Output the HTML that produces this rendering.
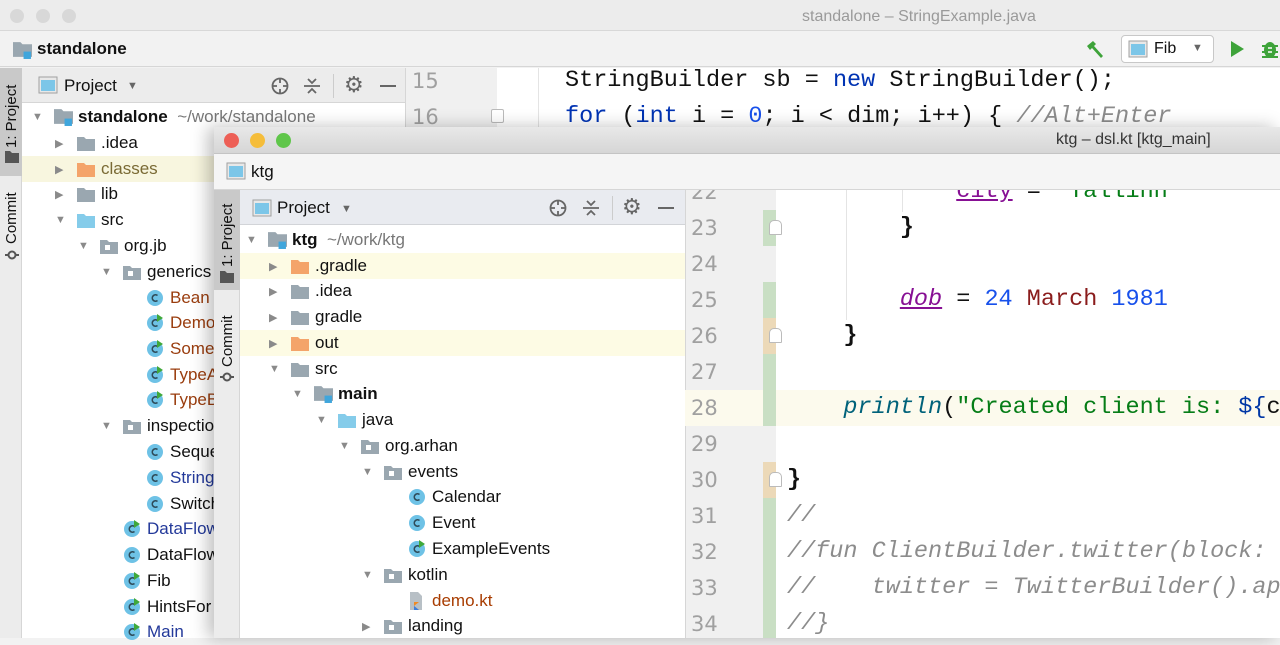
<!DOCTYPE html>
<html><head><meta charset="utf-8"><style>
*{margin:0;padding:0;box-sizing:border-box}
body{width:1280px;height:638px;overflow:hidden;position:relative;background:#f2f2f2;font-family:"Liberation Sans",Helvetica,Arial,sans-serif;color:#111}
.a{position:absolute}
.r{position:absolute;height:26px;display:flex;align-items:center;font-size:17px;white-space:nowrap}
.ar{width:22px;font-size:11px;color:#8a8a8a;display:inline-block}
.ic{width:24px;display:inline-flex;align-items:center}
.code{font-family:"Liberation Mono","DejaVu Sans Mono",monospace;font-size:23.5px;white-space:pre;position:absolute;line-height:36px}
.ln{font-family:"DejaVu Sans",sans-serif;font-size:21px;color:#a0a0a0;position:absolute;line-height:36px}
.vt{position:absolute;transform:rotate(-90deg);transform-origin:left top;font-size:15px;white-space:nowrap}
</style></head><body>
<svg width="0" height="0" style="position:absolute"><defs>
<symbol id="fg" viewBox="0 0 18 15"><path d="M0 1h7l2 2h9v12H0z" fill="#9aa7b0"/></symbol>
<symbol id="fo" viewBox="0 0 18 15"><path d="M0 1h7l2 2h9v12H0z" fill="#f4a46a"/></symbol>
<symbol id="fb" viewBox="0 0 18 15"><path d="M0 1h7l2 2h9v12H0z" fill="#85ccea"/></symbol>
<symbol id="fp" viewBox="0 0 18 15"><path d="M0 1h7l2 2h9v12H0z" fill="#9aa7b0"/><rect x="5" y="6" width="5" height="5" fill="#fff"/></symbol>
<symbol id="fm" viewBox="0 0 18 17"><path d="M0 1h7l2 2h9v12H0z" fill="#9aa7b0"/><rect x="10" y="10" width="7" height="7" fill="#40a6dc"/></symbol>
<symbol id="cc" viewBox="0 0 18 18"><circle cx="9" cy="9" r="8" fill="#6ec2e6"/><path d="M11.5 6.5a3.2 3.2 0 1 0 0 5" fill="none" stroke="#2e4a58" stroke-width="1.6"/></symbol>
<symbol id="cr" viewBox="0 0 18 18"><circle cx="9" cy="9" r="8" fill="#6ec2e6"/><path d="M11.5 6.5a3.2 3.2 0 1 0 0 5" fill="none" stroke="#2e4a58" stroke-width="1.6"/><path d="M11 0l6 4-6 4z" fill="#3fa83a"/></symbol>
<symbol id="pw" viewBox="0 0 20 18"><rect x="1" y="1" width="18" height="16" fill="#e8e8e8" stroke="#a0a0a0"/><rect x="3" y="4" width="14" height="11" fill="#7cc6e8"/></symbol>
</defs></svg>

<!-- BACK WINDOW -->
<div class="a" style="left:0;top:0;width:1280px;height:31px;background:#ececec;border-bottom:1px solid #d8d8d8"></div>
<div class="a" style="left:10px;top:9px;width:14px;height:14px;border-radius:50%;background:#d8d8d8"></div>
<div class="a" style="left:36px;top:9px;width:14px;height:14px;border-radius:50%;background:#d8d8d8"></div>
<div class="a" style="left:62px;top:9px;width:14px;height:14px;border-radius:50%;background:#d8d8d8"></div>
<div class="a" style="left:802px;top:8px;font-size:16px;color:#9a9a9a">standalone – StringExample.java</div>
<div class="a" style="left:0;top:31px;width:1280px;height:36px;background:#f2f2f2;border-bottom:1px solid #d6d6d6"></div>
<svg class="a" style="left:13px;top:41px" width="19" height="18"><use href="#fm"/></svg>
<div class="a" style="left:37px;top:39px;font-size:17px;font-weight:bold">standalone</div>
<svg class="a" style="left:1084px;top:38px" width="22" height="22"><path d="M3 8l6-5 3 3-2 2 9 10-2 2-9-10-2 2z" fill="#3ea33a"/></svg>
<div class="a" style="left:1121px;top:35px;width:93px;height:28px;background:#fff;border:1px solid #c8c8c8;border-radius:4px"></div>
<svg class="a" style="left:1128px;top:40px" width="20" height="18"><use href="#pw"/></svg>
<div class="a" style="left:1154px;top:40px;font-size:16px">Fib</div>
<div class="a" style="left:1192px;top:42px;font-size:11px;color:#666">▼</div>
<svg class="a" style="left:1229px;top:39px" width="16" height="20"><path d="M2 2l13 8-13 8z" fill="#3ea33a"/></svg>
<svg class="a" style="left:1260px;top:38px" width="20" height="22"><ellipse cx="10" cy="12" rx="6" ry="8" fill="#3ea33a"/><path d="M2 8h16M2 14h16M2 19h16" stroke="#3ea33a" stroke-width="2"/><path d="M8 10h4M8 14h4" stroke="#fff" stroke-width="1.5"/></svg>

<div class="a" style="left:0;top:68px;width:22px;height:570px;background:#ececec;border-right:1px solid #d6d6d6"></div>
<div class="a" style="left:0;top:68px;width:22px;height:108px;background:#c9c9c9"></div>
<div class="vt" style="left:3px;top:148px">1: Project</div>
<svg class="a" style="left:5px;top:150px" width="14" height="13"><path d="M0 1h5l2 2h7v10H0z" fill="#555"/></svg>
<div class="vt" style="left:3px;top:244px">Commit</div>
<svg class="a" style="left:5px;top:248px" width="14" height="14"><circle cx="7" cy="7" r="3.5" fill="none" stroke="#555" stroke-width="2"/><path d="M0 7h3M11 7h3" stroke="#555" stroke-width="2"/></svg>

<div class="a" style="left:22px;top:68px;width:383px;height:35px;background:#ececec;border-bottom:1px solid #d6d6d6"></div>
<svg class="a" style="left:38px;top:76px" width="20" height="18"><use href="#pw"/></svg>
<div class="a" style="left:64px;top:76px;font-size:17px">Project</div>
<div class="a" style="left:127px;top:80px;font-size:11px;color:#666">▼</div>
<svg class="a" style="left:270px;top:76px" width="20" height="20"><circle cx="10" cy="10" r="7.5" fill="none" stroke="#666" stroke-width="1.8"/><path d="M10 2v5M10 13v5M2 10h5M13 10h5" stroke="#666" stroke-width="1.8"/></svg>
<svg class="a" style="left:303px;top:76px" width="18" height="20"><path d="M1 10h16M5 3l4 4 4-4M5 17l4-4 4 4" stroke="#666" stroke-width="1.8" fill="none"/></svg>
<div class="a" style="left:333px;top:74px;width:1px;height:24px;background:#ccc"></div>
<div class="a" style="left:344px;top:72px;font-size:22px;color:#666">⚙</div>
<div class="a" style="left:380px;top:85px;width:16px;height:2px;background:#666"></div>

<div class="a" style="left:22px;top:103px;width:383px;height:535px;background:#fff"></div>
<div class="a" style="left:22px;top:156px;width:383px;height:26px;background:#f8f6df"></div>

<div class="r" style="left:32px;top:104px"><span class="ar">▼</span><span class="ic"><svg width="19" height="18"><use href="#fm"/></svg></span><b>standalone</b>&nbsp;&nbsp;<span style="color:#777">~/work/standalone</span></div>
<div class="r" style="left:55px;top:130px"><span class="ar">▶</span><span class="ic"><svg width="18" height="15"><use href="#fg"/></svg></span>.idea</div>
<div class="r" style="left:55px;top:156px"><span class="ar">▶</span><span class="ic"><svg width="18" height="15"><use href="#fo"/></svg></span><span style="color:#7a6a34">classes</span></div>
<div class="r" style="left:55px;top:181px"><span class="ar">▶</span><span class="ic"><svg width="18" height="15"><use href="#fg"/></svg></span>lib</div>
<div class="r" style="left:55px;top:207px"><span class="ar">▼</span><span class="ic"><svg width="18" height="15"><use href="#fb"/></svg></span>src</div>
<div class="r" style="left:78px;top:233px"><span class="ar">▼</span><span class="ic"><svg width="18" height="15"><use href="#fp"/></svg></span>org.jb</div>
<div class="r" style="left:101px;top:259px"><span class="ar">▼</span><span class="ic"><svg width="18" height="15"><use href="#fp"/></svg></span>generics</div>
<div class="r" style="left:124px;top:285px"><span class="ar"></span><span class="ic"><svg width="18" height="18"><use href="#cc"/></svg></span><span style="color:#9a3d0e">Bean</span></div>
<div class="r" style="left:124px;top:310px"><span class="ar"></span><span class="ic"><svg width="18" height="18"><use href="#cr"/></svg></span><span style="color:#9a3d0e">Demo</span></div>
<div class="r" style="left:124px;top:336px"><span class="ar"></span><span class="ic"><svg width="18" height="18"><use href="#cr"/></svg></span><span style="color:#9a3d0e">Some</span></div>
<div class="r" style="left:124px;top:362px"><span class="ar"></span><span class="ic"><svg width="18" height="18"><use href="#cr"/></svg></span><span style="color:#9a3d0e">TypeA</span></div>
<div class="r" style="left:124px;top:387px"><span class="ar"></span><span class="ic"><svg width="18" height="18"><use href="#cr"/></svg></span><span style="color:#9a3d0e">TypeB</span></div>
<div class="r" style="left:101px;top:413px"><span class="ar">▼</span><span class="ic"><svg width="18" height="15"><use href="#fp"/></svg></span>inspection</div>
<div class="r" style="left:124px;top:439px"><span class="ar"></span><span class="ic"><svg width="18" height="18"><use href="#cc"/></svg></span>Sequence</div>
<div class="r" style="left:124px;top:465px"><span class="ar"></span><span class="ic"><svg width="18" height="18"><use href="#cc"/></svg></span><span style="color:#23399a">String</span></div>
<div class="r" style="left:124px;top:491px"><span class="ar"></span><span class="ic"><svg width="18" height="18"><use href="#cc"/></svg></span>Switch</div>
<div class="r" style="left:101px;top:516px"><span class="ar"></span><span class="ic"><svg width="18" height="18"><use href="#cr"/></svg></span><span style="color:#23399a">DataFlow</span></div>
<div class="r" style="left:101px;top:542px"><span class="ar"></span><span class="ic"><svg width="18" height="18"><use href="#cc"/></svg></span>DataFlow</div>
<div class="r" style="left:101px;top:568px"><span class="ar"></span><span class="ic"><svg width="18" height="18"><use href="#cr"/></svg></span>Fib</div>
<div class="r" style="left:101px;top:594px"><span class="ar"></span><span class="ic"><svg width="18" height="18"><use href="#cr"/></svg></span>HintsFor</div>
<div class="r" style="left:101px;top:619px"><span class="ar"></span><span class="ic"><svg width="18" height="18"><use href="#cr"/></svg></span><span style="color:#23399a">Main</span></div>

<div class="a" style="left:405px;top:68px;width:92px;height:570px;background:#f0f0f0;border-left:1px solid #d6d6d6"></div>
<div class="a" style="left:497px;top:68px;width:783px;height:570px;background:#fff"></div>
<div class="a" style="left:538px;top:68px;width:1px;height:60px;background:#e4e4e4"></div>
<div class="ln" style="left:412px;top:63px">15</div>
<div class="ln" style="left:412px;top:99px">16</div>
<div class="a" style="left:491px;top:109px;width:13px;height:14px;border:1px solid #bbb;background:#fff;border-radius:2px"></div>
<div class="code" style="left:565px;top:63px">StringBuilder sb = <span style="color:#0033b3">new</span> StringBuilder();</div>
<div class="code" style="left:565px;top:99px"><span style="color:#0033b3">for</span> (<span style="color:#0033b3">int</span> i = <span style="color:#1750eb">0</span>; i &lt; dim; i++) { <i style="color:#8c8c8c">//Alt+Enter</i></div>

<!-- FRONT WINDOW -->
<div class="a" style="left:214px;top:127px;width:1066px;height:511px;background:#fff;box-shadow:-6px 0 16px rgba(0,0,0,.25);overflow:hidden">
  <div class="a" style="left:0;top:0;width:1066px;height:27px;background:linear-gradient(#e8e8e8,#d6d6d6);border-bottom:1px solid #c4c4c4"></div>
  <div class="a" style="left:10px;top:6px;width:15px;height:15px;border-radius:50%;background:#ed5f56"></div>
  <div class="a" style="left:36px;top:6px;width:15px;height:15px;border-radius:50%;background:#f5bd3a"></div>
  <div class="a" style="left:62px;top:6px;width:15px;height:15px;border-radius:50%;background:#5fc64a"></div>
  <div class="a" style="left:842px;top:4px;font-size:16px;color:#333">ktg – dsl.kt [ktg_main]</div>
  <div class="a" style="left:0;top:27px;width:1066px;height:36px;background:#f5f5f5;border-bottom:1px solid #d6d6d6"></div>
  <svg class="a" style="left:12px;top:35px" width="20" height="18"><use href="#pw"/></svg>
  <div class="a" style="left:37px;top:35px;font-size:17px">ktg</div>

  <div class="a" style="left:0;top:63px;width:26px;height:448px;background:#ececec;border-right:1px solid #d6d6d6"></div>
  <div class="a" style="left:0;top:63px;width:26px;height:100px;background:#c9c9c9"></div>
  <div class="vt" style="left:5px;top:140px">1: Project</div>
  <svg class="a" style="left:6px;top:143px" width="14" height="13"><path d="M0 1h5l2 2h7v10H0z" fill="#555"/></svg>
  <div class="vt" style="left:5px;top:240px">Commit</div>
  <svg class="a" style="left:6px;top:243px" width="14" height="14"><circle cx="7" cy="7" r="3.5" fill="none" stroke="#555" stroke-width="2"/><path d="M0 7h3M11 7h3" stroke="#555" stroke-width="2"/></svg>

  <div class="a" style="left:26px;top:63px;width:445px;height:35px;background:#e9ebf0;border-bottom:1px solid #d2d4d8"></div>
  <svg class="a" style="left:38px;top:72px" width="20" height="18"><use href="#pw"/></svg>
  <div class="a" style="left:63px;top:71px;font-size:17px">Project</div>
  <div class="a" style="left:127px;top:76px;font-size:11px;color:#666">▼</div>
  <svg class="a" style="left:334px;top:71px" width="20" height="20"><circle cx="10" cy="10" r="7.5" fill="none" stroke="#666" stroke-width="1.8"/><path d="M10 2v5M10 13v5M2 10h5M13 10h5" stroke="#666" stroke-width="1.8"/></svg>
  <svg class="a" style="left:368px;top:71px" width="18" height="20"><path d="M1 10h16M5 3l4 4 4-4M5 17l4-4 4 4" stroke="#666" stroke-width="1.8" fill="none"/></svg>
  <div class="a" style="left:398px;top:69px;width:1px;height:24px;background:#ccc"></div>
  <div class="a" style="left:408px;top:67px;font-size:22px;color:#666">⚙</div>
  <div class="a" style="left:444px;top:80px;width:16px;height:2px;background:#666"></div>

  <div class="a" style="left:26px;top:126px;width:445px;height:26px;background:#fdfbe4"></div>
  <div class="a" style="left:26px;top:203px;width:445px;height:26px;background:#fdfbe4"></div>
</div>

<div class="r" style="left:246px;top:227px"><span class="ar">▼</span><span class="ic"><svg width="19" height="18"><use href="#fm"/></svg></span><b>ktg</b>&nbsp;&nbsp;<span style="color:#777">~/work/ktg</span></div>
<div class="r" style="left:269px;top:253px"><span class="ar">▶</span><span class="ic"><svg width="18" height="15"><use href="#fo"/></svg></span>.gradle</div>
<div class="r" style="left:269px;top:278px"><span class="ar">▶</span><span class="ic"><svg width="18" height="15"><use href="#fg"/></svg></span>.idea</div>
<div class="r" style="left:269px;top:304px"><span class="ar">▶</span><span class="ic"><svg width="18" height="15"><use href="#fg"/></svg></span>gradle</div>
<div class="r" style="left:269px;top:330px"><span class="ar">▶</span><span class="ic"><svg width="18" height="15"><use href="#fo"/></svg></span>out</div>
<div class="r" style="left:269px;top:356px"><span class="ar">▼</span><span class="ic"><svg width="18" height="15"><use href="#fg"/></svg></span>src</div>
<div class="r" style="left:292px;top:381px"><span class="ar">▼</span><span class="ic"><svg width="19" height="18"><use href="#fm"/></svg></span><b>main</b></div>
<div class="r" style="left:316px;top:407px"><span class="ar">▼</span><span class="ic"><svg width="18" height="15"><use href="#fb"/></svg></span>java</div>
<div class="r" style="left:339px;top:433px"><span class="ar">▼</span><span class="ic"><svg width="18" height="15"><use href="#fp"/></svg></span>org.arhan</div>
<div class="r" style="left:362px;top:459px"><span class="ar">▼</span><span class="ic"><svg width="18" height="15"><use href="#fp"/></svg></span>events</div>
<div class="r" style="left:386px;top:484px"><span class="ar"></span><span class="ic"><svg width="18" height="18"><use href="#cc"/></svg></span>Calendar</div>
<div class="r" style="left:386px;top:510px"><span class="ar"></span><span class="ic"><svg width="18" height="18"><use href="#cc"/></svg></span>Event</div>
<div class="r" style="left:386px;top:536px"><span class="ar"></span><span class="ic"><svg width="18" height="18"><use href="#cr"/></svg></span>ExampleEvents</div>
<div class="r" style="left:362px;top:562px"><span class="ar">▼</span><span class="ic"><svg width="18" height="15"><use href="#fp"/></svg></span>kotlin</div>
<div class="r" style="left:386px;top:588px"><span class="ar"></span><span class="ic"><svg width="18" height="20"><path d="M2 1h8l4 4v14H2z" fill="#b8c0c6"/><path d="M6 19V11h5l-5 4 5 4z" fill="#f08a24"/><path d="M6 19v-4l5 4z" fill="#3a7fe0"/></svg></span><span style="color:#a83c00">demo.kt</span></div>
<div class="r" style="left:362px;top:613px"><span class="ar">▶</span><span class="ic"><svg width="18" height="15"><use href="#fp"/></svg></span>landing</div>

<!-- front editor -->
<div class="a" style="left:685px;top:190px;width:91px;height:448px;background:#f0f0f0;border-left:1px solid #d6d6d6"></div>
<div class="a" style="left:685px;top:390px;width:595px;height:36px;background:#fcfaed"></div>
<div class="a" style="left:763px;top:210px;width:13px;height:36px;background:#c9dfc4"></div>
<div class="a" style="left:763px;top:282px;width:13px;height:36px;background:#c9dfc4"></div>
<div class="a" style="left:763px;top:318px;width:13px;height:36px;background:#ecd9b8"></div>
<div class="a" style="left:763px;top:354px;width:13px;height:72px;background:#c9dfc4"></div>
<div class="a" style="left:763px;top:462px;width:13px;height:36px;background:#ecd9b8"></div>
<div class="a" style="left:763px;top:498px;width:13px;height:140px;background:#c9dfc4"></div>
<div class="a" style="left:846px;top:190px;width:1px;height:130px;background:#e4e4e4"></div>
<div class="a" style="left:902px;top:190px;width:1px;height:22px;background:#e4e4e4"></div>
<div class="a" style="left:769px;top:220px;width:13px;height:15px;border:1px solid #bbb;background:#fff;border-radius:5px 5px 1px 1px"></div>
<div class="a" style="left:769px;top:328px;width:13px;height:15px;border:1px solid #bbb;background:#fff;border-radius:5px 5px 1px 1px"></div>
<div class="a" style="left:769px;top:472px;width:13px;height:15px;border:1px solid #bbb;background:#fff;border-radius:5px 5px 1px 1px"></div>

<div class="ln" style="left:691px;top:174px;clip-path:inset(16px 0 0 0)">22</div>
<div class="ln" style="left:691px;top:210px">23</div>
<div class="ln" style="left:691px;top:246px">24</div>
<div class="ln" style="left:691px;top:282px">25</div>
<div class="ln" style="left:691px;top:318px">26</div>
<div class="ln" style="left:691px;top:354px">27</div>
<div class="ln" style="left:691px;top:390px">28</div>
<div class="ln" style="left:691px;top:426px">29</div>
<div class="ln" style="left:691px;top:462px">30</div>
<div class="ln" style="left:691px;top:498px">31</div>
<div class="ln" style="left:691px;top:534px">32</div>
<div class="ln" style="left:691px;top:570px">33</div>
<div class="ln" style="left:691px;top:606px">34</div>

<div class="code" style="left:787px;top:174px;clip-path:inset(16px 0 0 0)">            <u style="color:#871094">city</u> = <span style="color:#067d17">"Tallinn"</span></div>
<div class="code" style="left:787px;top:210px">        <b>}</b></div>
<div class="code" style="left:787px;top:282px">        <i><u style="color:#871094">dob</u></i> = <span style="color:#1750eb">24</span> <span style="color:#8a1c1c">March</span> <span style="color:#1750eb">1981</span></div>
<div class="code" style="left:787px;top:318px">    <b>}</b></div>
<div class="code" style="left:787px;top:390px">    <i style="color:#00627a">println</i>(<span style="color:#067d17">"Created client is: </span><span style="color:#0037a6">${</span>c</div>
<div class="code" style="left:787px;top:462px"><b>}</b></div>
<div class="code" style="left:787px;top:498px;color:#8c8c8c"><i>//</i></div>
<div class="code" style="left:787px;top:534px;color:#8c8c8c"><i>//fun ClientBuilder.twitter(block: </i></div>
<div class="code" style="left:787px;top:570px;color:#8c8c8c"><i>//    twitter = TwitterBuilder().ap</i></div>
<div class="code" style="left:787px;top:606px;color:#8c8c8c"><i>//}</i></div>
</body></html>
